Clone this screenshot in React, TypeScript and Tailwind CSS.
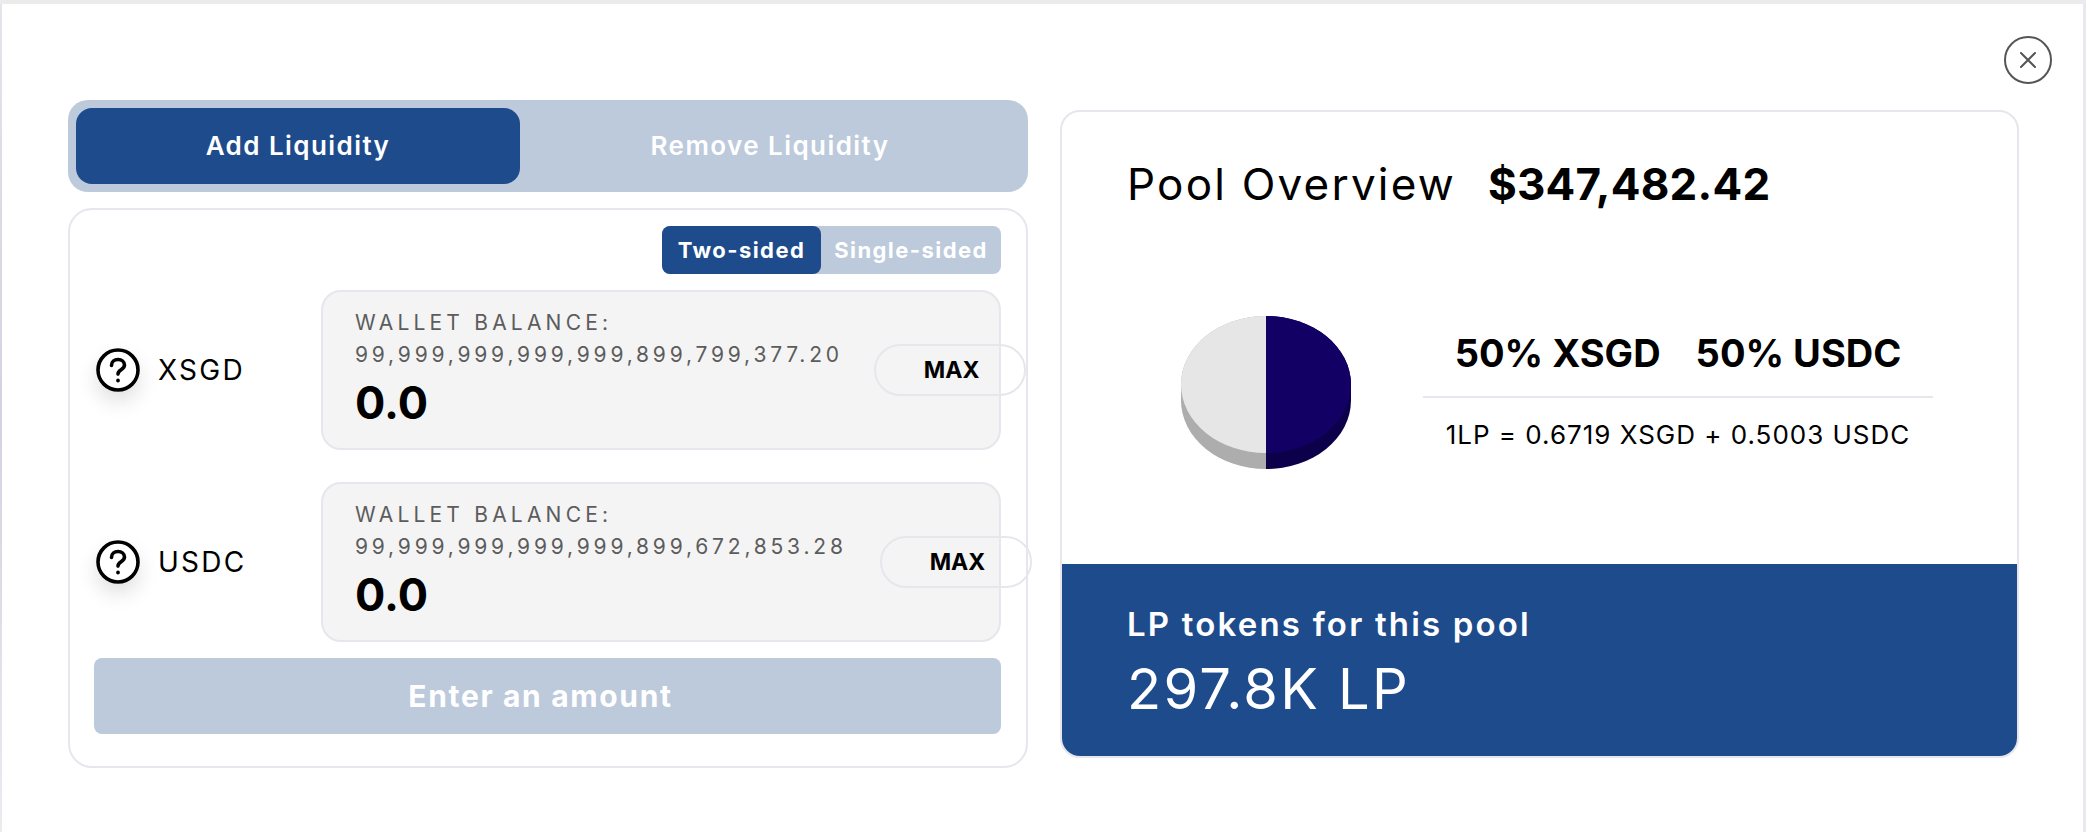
import React from 'react';

const font = { fontFamily: 'Inter, "Noto Sans", sans-serif' };

const QuestionIcon = () => (
  <div className="w-[44px] h-[44px] ml-[2px] shrink-0 rounded-full shadow-[0_10px_20px_rgba(0,0,0,0.12)]">
    <svg viewBox="0 0 44 44" className="w-full h-full" fill="none" stroke="#000" strokeWidth="3.6" strokeLinecap="round">
      <circle cx="22" cy="22" r="20" fill="#fff" />
      <path d="M15.5 17.5c0-3.6 2.9-6 6.5-6s6.5 2.4 6.5 5.6c0 4.8-6.5 4.6-6.5 9" />
      <circle cx="22" cy="32.5" r="1.1" fill="#000" strokeWidth="1.6" />
    </svg>
  </div>
);

const TokenRow = ({ symbol, balance, maxClass }: { symbol: string; balance: string; maxClass: string }) => (
  <div className="flex items-center">
    <div className="w-[227px] shrink-0 flex items-center gap-[18px]">
      <QuestionIcon />
      <span className="text-[28px] tracking-[0.08em] text-black">{symbol}</span>
    </div>
    <div className="w-[680px] h-[160px] shrink-0 rounded-[20px] border-2 border-[#e6e6ec] bg-[#f4f4f4] pl-[32px] flex items-center">
      <div className="shrink-0 pt-[1px]">
        <div className="text-[21px] leading-[32px] tracking-[4.2px] text-[#5c5c5c]">WALLET BALANCE:</div>
        <div className="text-[21px] leading-[32px] tracking-[3.8px] text-[#5c5c5c]">{balance}</div>
        <div className="text-[45px] leading-[64px] font-bold text-black">0.0</div>
      </div>
      <button className={`${maxClass} w-[152px] h-[52px] shrink-0 rounded-full border-2 border-[#e6e6ec] pl-[48px] text-[23px] font-bold text-black text-left`}>
        MAX
      </button>
    </div>
  </div>
);

const PoolPie = () => (
  <svg width="172" height="155" viewBox="0 0 172 155" className="shrink-0">
    <path d="M86 1A85 68.5 0 0 0 1 69.5v16A85 68.5 0 0 0 86 154z" fill="#adadad" />
    <path d="M86 1A85 68.5 0 0 1 171 69.5v16A85 68.5 0 0 1 86 154z" fill="#0c004a" />
    <path d="M86 1A85 68.5 0 0 0 86 138z" fill="#e6e6e6" />
    <path d="M86 1A85 68.5 0 0 1 86 138z" fill="#120064" />
  </svg>
);

export default function App() {
  return (
    <div className="w-[2086px] h-[832px] overflow-hidden bg-white border-t-4 border-[#ebebeb] flex" style={font}>
      <div className="w-[2px] shrink-0 bg-linear-to-b from-[#e4e4ea] via-[#d2d2e2] to-[#ebebf0]" />
      <div className="relative flex-1 pl-[67px] pt-[96px] flex items-start gap-[32px] -ml-px">
        <button className="absolute left-[2003px] top-[32px] w-[48px] h-[48px] rounded-full border-2 border-[#555] flex items-center justify-center">
          <svg width="16" height="16" viewBox="0 0 16 16" fill="none" stroke="#555" strokeWidth="2" strokeLinecap="round">
            <path d="M1 1l14 14M15 1L1 15" />
          </svg>
        </button>

        <div className="w-[960px] shrink-0 flex flex-col gap-[16px]">
          <div className="h-[92px] rounded-[20px] bg-[#bccadb] p-[8px] flex items-stretch">
            <div className="w-[444px] pb-[2px] rounded-[16px] bg-[#1e4b8c] flex items-center justify-center text-[26px] font-semibold tracking-[0.055em] text-white">
              Add Liquidity
            </div>
            <div className="flex-1 pb-[2px] flex items-center justify-center text-[26px] font-semibold tracking-[0.055em] text-white">
              Remove Liquidity
            </div>
          </div>

          <div className="h-[560px] rounded-[24px] border-2 border-[#e6e6ec] pt-[16px] pl-[24px] flex flex-col">
            <div className="w-[907px] flex justify-end">
              <div className="flex h-[48px] rounded-[8px] bg-[#bccadb] text-[22px] font-bold tracking-[0.065em] text-white">
                <div className="w-[159px] rounded-[8px] bg-[#1e4b8c] flex items-center justify-center">Two-sided</div>
                <div className="w-[180px] flex items-center justify-center">Single-sided</div>
              </div>
            </div>
            <div className="mt-[16px] flex flex-col gap-[32px]">
              <TokenRow symbol="XSGD" balance="99,999,999,999,999,899,799,377.20" maxClass="ml-[31px]" />
              <TokenRow symbol="USDC" balance="99,999,999,999,999,899,672,853.28" maxClass="ml-[33px]" />
            </div>
            <button className="mt-[16px] w-[907px] h-[76px] pr-[14px] rounded-[8px] bg-[#bccadb] text-[30px] font-bold tracking-[0.055em] text-white">
              Enter an amount
            </button>
          </div>
        </div>

        <div className="mt-[10px] w-[959px] h-[648px] shrink-0 rounded-[20px] border-2 border-[#e6e6ec] flex flex-col overflow-hidden">
          <div className="flex-1 px-[65px] pt-[42px]">
            <div className="flex items-center gap-[32px] h-[60px]">
              <span className="text-[44px] tracking-[0.05em] text-black">Pool Overview</span>
              <span className="text-[44px] font-bold tracking-[0.005em] text-black">$347,482.42</span>
            </div>
            <div className="mt-[97px] ml-[53px] flex items-center">
              <PoolPie />
              <div className="ml-[71px] mb-[19px] w-[510px] flex flex-col items-center">
                <div className="flex gap-[35px] h-[85px] items-center text-[38px] font-bold text-black">
                  <span>50% XSGD</span>
                  <span>50% USDC</span>
                </div>
                <div className="w-full h-[2px] bg-[#e6e6ec]" />
                <div className="mt-[17px] text-[26px] tracking-[0.038em] text-black">1LP = 0.6719 XSGD + 0.5003 USDC</div>
              </div>
            </div>
          </div>
          <div className="h-[192px] shrink-0 bg-[#1e4b8c] px-[65px] pt-[40px] text-white">
            <div className="text-[33px] leading-[40px] font-semibold tracking-[0.066em]">LP tokens for this pool</div>
            <div className="mt-[11px] text-[56px] leading-[68px] tracking-[0.04em]">297.8K LP</div>
          </div>
        </div>
      </div>
      <div className="w-[3px] shrink-0 bg-[#e8e8f0]" />
    </div>
  );
}
